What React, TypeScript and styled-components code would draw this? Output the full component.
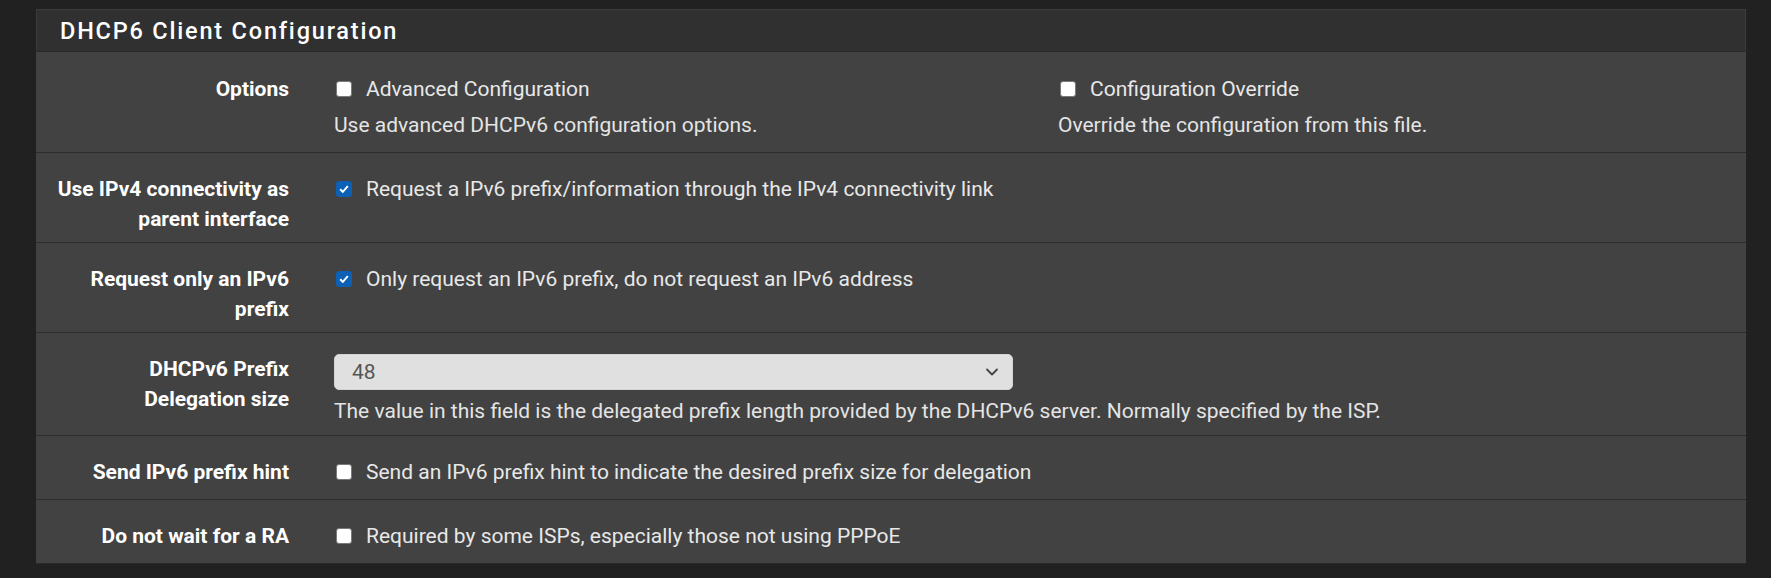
import React from 'react';
import styled, { createGlobalStyle } from 'styled-components';
import { ChevronDown } from 'lucide-react';

const GlobalStyle = createGlobalStyle`
  html, body {
    margin: 0;
    background-color: #212121;
  }

  body {
    font-family: Roboto, "Liberation Sans", Arial, sans-serif;
    font-size: 21px;
    color: #e0e0e0;
  }
`

const Page = styled.div`
  padding: 9px 25px 0 36px;
`

const Panel = styled.div`
  background-color: #424242;
  border-bottom: 1px solid #2a2a2a;
  box-shadow: 0 2px 0 #383838;
`

const PanelHeading = styled.h2`
  display: flex;
  align-items: center;
  box-sizing: border-box;
  height: 43px;
  margin: 0;
  padding: 0 23px;
  background-color: #303030;
  border: 1px solid #3c3c3c;
  border-bottom: 1px solid #2a2a2a;
  color: #fff;
  font-size: 23.5px;
  font-weight: 500;
  letter-spacing: 1.8px;
`

const Row = styled.div`
  display: grid;
  grid-template-columns: 238px 1fr;
  column-gap: 45px;
  padding: 7px 0 8px 15px;
  border-top: 1px solid #2c2c2c;

  &:first-of-type {
    border-top: none;
    padding-top: 8px;
  }
`

const Label = styled.div`
  padding-top: 14px;
  text-align: right;
  color: #fff;
  font-weight: 700;
  line-height: 30px;
`

const Field = styled.div<{ $tight?: boolean }>`
  padding: 14px 0 ${p => (p.$tight ? '1px' : '4px')};
`

const OptionGrid = styled.div`
  display: grid;
  grid-template-columns: 724px 1fr;
`

const CheckLine = styled.label`
  display: flex;
  align-items: center;
  gap: 14px;
  height: 30px;
  line-height: 30px;
  color: #e8e8e8;
`

const Box = styled.span<{ $checked?: boolean }>`
  display: inline-flex;
  align-items: center;
  justify-content: center;
  box-sizing: border-box;
  width: 16px;
  height: 16px;
  margin-left: 2px;
  border-radius: 3px;
  background-color: ${p => (p.$checked ? '#0c61b7' : '#fff')};
  border: 1px solid ${p => (p.$checked ? '#0c61b7' : '#7a7a7a')};
`

const Help = styled.div`
  margin-top: 6px;
  line-height: 30px;
  color: #e4e4e4;
`

const Select = styled.div`
  display: flex;
  align-items: center;
  justify-content: space-between;
  box-sizing: border-box;
  width: 679px;
  height: 36px;
  padding: 0 10px 0 17px;
  border-radius: 5px;
  background-color: #e0e0e0;
  border: 1px solid #d2d2d2;
  color: #555;
`

const Check = ({ checked, children }: { checked?: boolean; children: React.ReactNode }) => (
  <CheckLine>
    <Box $checked={checked}>
      {checked && (
        <svg width="12" height="12" viewBox="0 0 12 12">
          <path d="M2.2 6.3 L4.8 8.9 L9.8 3.2" fill="none" stroke="#fff" strokeWidth="2" />
        </svg>
      )}
    </Box>
    {children}
  </CheckLine>
)

const App: React.FC = () => {
  return (
    <>
      <GlobalStyle />
      <Page>
        <Panel>
          <PanelHeading>DHCP6 Client Configuration</PanelHeading>

          <Row>
            <Label>Options</Label>
            <Field>
              <OptionGrid>
                <div>
                  <Check>Advanced Configuration</Check>
                  <Help>Use advanced DHCPv6 configuration options.</Help>
                </div>
                <div>
                  <Check>Configuration Override</Check>
                  <Help>Override the configuration from this file.</Help>
                </div>
              </OptionGrid>
            </Field>
          </Row>

          <Row>
            <Label>Use IPv4 connectivity as parent interface</Label>
            <Field>
              <Check checked>Request a IPv6 prefix/information through the IPv4 connectivity link</Check>
            </Field>
          </Row>

          <Row>
            <Label>Request only an IPv6 prefix</Label>
            <Field>
              <Check checked>Only request an IPv6 prefix, do not request an IPv6 address</Check>
            </Field>
          </Row>

          <Row>
            <Label>DHCPv6 Prefix Delegation size</Label>
            <Field $tight>
              <Select>
                <span>48</span>
                <ChevronDown size={20} color="#444" strokeWidth={2.2} />
              </Select>
              <Help>The value in this field is the delegated prefix length provided by the DHCPv6 server. Normally specified by the ISP.</Help>
            </Field>
          </Row>

          <Row>
            <Label>Send IPv6 prefix hint</Label>
            <Field>
              <Check>Send an IPv6 prefix hint to indicate the desired prefix size for delegation</Check>
            </Field>
          </Row>

          <Row>
            <Label>Do not wait for a RA</Label>
            <Field>
              <Check>Required by some ISPs, especially those not using PPPoE</Check>
            </Field>
          </Row>
        </Panel>
      </Page>
    </>
  )
}

export default App
